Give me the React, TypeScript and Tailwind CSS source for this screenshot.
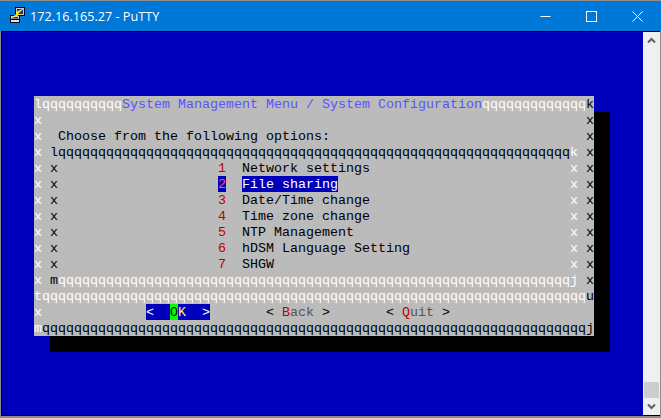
const white = "text-white";
const black = "text-black";
const red = "text-[#bb0000]";
const dim = "text-[#555555]";
const title = "text-[#5555ff]";

type Seg = [string, string?];

const Row = ({ segs }: { segs: Seg[] }) => (
  <div className="h-4 flex whitespace-pre">
    {segs.map(([text, cls], i) => (
      <span key={i} className={`h-4 leading-[18px] ${cls ?? ""}`}>
        {text}
      </span>
    ))}
  </div>
);

const q = (n: number) => "q".repeat(n);
const sp = (n: number) => " ".repeat(n);

const Options = [
  { num: "1", label: "Network settings" },
  { num: "2", label: "File sharing", active: true },
  { num: "3", label: "Date/Time change" },
  { num: "4", label: "Time zone change" },
  { num: "5", label: "NTP Management" },
  { num: "6", label: "hDSM Language Setting" },
  { num: "7", label: "SHGW" },
];

const OptionRow = ({ num, label, active }: { num: string; label: string; active?: boolean }) => (
  <Row
    segs={[
      ["x", white],
      [" "],
      ["x", black],
      [sp(20)],
      [num, active ? "text-[#ff5555] bg-[#0000bb]" : red],
      [sp(2)],
      [label, active ? "text-white bg-[#0000bb]" : black],
      [sp(41 - label.length)],
      ["x", white],
      [" "],
      ["x", black],
    ]}
  />
);

const PuttyIcon = () => (
  <svg width="16" height="16" viewBox="0 0 16 16" className="shrink-0 -mt-[2px]">
    <rect x="5.5" y="0.5" width="9" height="8" fill="#c8c8c8" stroke="#000" />
    <rect x="7" y="2" width="6" height="5" fill="#1c2fa8" />
    <rect x="0.5" y="8.5" width="9" height="4" fill="#c8c8c8" stroke="#000" />
    <rect x="2" y="10" width="6" height="1.5" fill="#1c2fa8" />
    <rect x="0.5" y="12.5" width="9" height="3" fill="#e0e0e0" stroke="#000" />
    <path d="M12.5 2.5 L6 5.5 L7.5 6.5 L2.5 10.5 L9 7.5 L7.5 6.5 L12.5 2.5 Z" fill="#ffee00" stroke="#ffee00" strokeWidth="1" />
  </svg>
);

export default function App() {
  return (
    <div className="w-[661px] h-[418px] flex flex-col overflow-hidden bg-[#8c8c8c] pb-[2px] pl-[1px] pr-[1px]">
      <div className="h-[30px] mt-[1px] -ml-[1px] -mr-[1px] pl-[10px] pr-[1px] flex items-center shrink-0 bg-[#0078d7] text-white font-['Open_Sans',sans-serif] text-[12.65px]">
        <PuttyIcon />
        <span className="ml-[4px]">172.16.165.27 - PuTTY</span>
        <div className="ml-auto flex h-full">
          <div className="w-[46px] flex items-center justify-center">
            <svg width="11" height="11" viewBox="0 0 11 11" stroke="#fff" fill="none">
              <path d="M0.5 5.5H10.5" />
            </svg>
          </div>
          <div className="w-[46px] flex items-center justify-center">
            <svg width="11" height="11" viewBox="0 0 11 11" stroke="#fff" fill="none">
              <rect x="0.5" y="0.5" width="10" height="10" />
            </svg>
          </div>
          <div className="w-[46px] flex items-center justify-center">
            <svg width="11" height="11" viewBox="0 0 11 11" stroke="#fff" fill="none">
              <path d="M0.5 0.5L10.5 10.5M10.5 0.5L0.5 10.5" />
            </svg>
          </div>
        </div>
      </div>
      <div className="flex-1 flex min-h-0 bg-black pt-[1px] pl-[1px] pb-[1px]">
        <div className="flex-1 bg-[#0000bb] pl-8 pt-16 font-['Liberation_Mono',monospace] text-[13.33px] leading-4">
          <div className="w-[560px] bg-[#bbbbbb] shadow-[16px_16px_0_#000]">
            <Row
              segs={[
                ["l" + q(10), white],
                ["System Management Menu / System Configuration", title],
                [q(13), white],
                ["k", black],
              ]}
            />
            <Row segs={[["x", white], [sp(68)], ["x", black]]} />
            <Row
              segs={[
                ["x", white],
                ["  Choose from the following options:", black],
                [sp(32)],
                ["x", black],
              ]}
            />
            <Row
              segs={[
                ["x", white],
                [" "],
                ["l" + q(64), black],
                ["k", white],
                [" "],
                ["x", black],
              ]}
            />
            {Options.map((o) => (
              <OptionRow key={o.num} {...o} />
            ))}
            <Row
              segs={[
                ["x", white],
                [" "],
                ["m", black],
                [q(64) + "j", white],
                [" "],
                ["x", black],
              ]}
            />
            <Row segs={[["t" + q(68), white], ["u", black]]} />
            <Row
              segs={[
                ["x", white],
                [sp(13)],
                ["<  ", "text-white bg-[#0000bb]"],
                ["O", "text-black bg-[#00ff00]"],
                ["K", "text-[#ffff55] bg-[#0000bb]"],
                ["  >", "text-white bg-[#0000bb]"],
                [sp(7)],
                ["< ", black],
                ["B", red],
                ["ack", dim],
                [" >", black],
                [sp(7)],
                ["< ", black],
                ["Q", red],
                ["uit", dim],
                [" >", black],
                [sp(18)],
                ["x", black],
              ]}
            />
            <Row segs={[["m", white], [q(68) + "j", black]]} />
          </div>
        </div>
        <div className="w-[17px] flex flex-col items-center bg-[#f0f0f0]">
          <div className="h-[17px] flex items-center justify-center">
            <svg width="9" height="7" viewBox="0 0 9 7" fill="none" stroke="#606060" strokeWidth="2">
              <path d="M1 5.5L4.5 2L8 5.5" />
            </svg>
          </div>
          <div className="flex-1" />
          <div className="h-4 w-[15px] bg-[#cdcdcd]" />
          <div className="h-[17px] flex items-center justify-center">
            <svg width="9" height="7" viewBox="0 0 9 7" fill="none" stroke="#606060" strokeWidth="2">
              <path d="M1 1.5L4.5 5L8 1.5" />
            </svg>
          </div>
        </div>
      </div>
    </div>
  );
}
